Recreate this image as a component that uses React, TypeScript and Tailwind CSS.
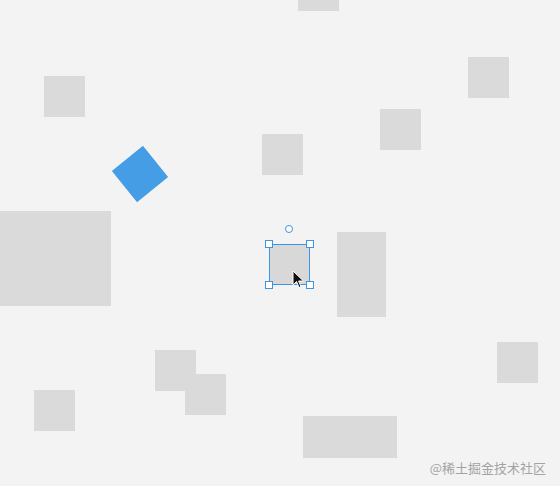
const shapes = [
  { x: 298, y: -30, w: 41, h: 41 },
  { x: 44, y: 76, w: 41, h: 41 },
  { x: 468, y: 57, w: 41, h: 41 },
  { x: 380, y: 109, w: 41, h: 41 },
  { x: 262, y: 134, w: 41, h: 41 },
  { x: 0, y: 211, w: 111, h: 95 },
  { x: 337, y: 232, w: 49, h: 85 },
  { x: 497, y: 342, w: 41, h: 41 },
  { x: 155, y: 350, w: 41, h: 41 },
  { x: 185, y: 374, w: 41, h: 41 },
  { x: 34, y: 390, w: 41, h: 41 },
  { x: 303, y: 416, w: 94, h: 42 },
];

function Handle({ className }: { className: string }) {
  return <div className={`absolute w-[8px] h-[8px] bg-white border border-[#3d94e0] ${className}`} />;
}

export default function App() {
  return (
    <div className="relative w-[560px] h-[486px] overflow-hidden bg-[#f3f3f3]">
      {shapes.map((s, i) => (
        <div
          key={i}
          className="absolute bg-[#dadada]"
          style={{ left: s.x, top: s.y, width: s.w, height: s.h }}
        />
      ))}

      {/* dragged piece */}
      <div className="absolute left-[120px] top-[154px] w-[40px] h-[40px] bg-[#459ee5] rotate-[51deg]" />

      {/* selected piece */}
      <div className="absolute left-[269px] top-[244px] w-[41px] h-[41px] bg-[#d8d8d8] border border-[#3d94e0]">
        <Handle className="-left-[5px] -top-[5px]" />
        <Handle className="-right-[5px] -top-[5px]" />
        <Handle className="-left-[5px] -bottom-[5px]" />
        <Handle className="-right-[5px] -bottom-[5px]" />
        <div className="absolute left-[15px] -top-[20px] w-[8px] h-[8px] rounded-full border border-[#3d94e0] bg-white" />
      </div>

      {/* cursor */}
      <svg className="absolute left-[292px] top-[270px]" width="13" height="19" viewBox="0 0 13 19">
        <path d="M1 1 L1 15 L4.5 11.5 L7 17.5 L9 16.6 L6.6 11 L11.5 11 Z" fill="#111" stroke="#fff" strokeWidth="1" strokeLinejoin="round" />
      </svg>

      <div className="absolute right-[14px] bottom-[12px] text-[13px] text-[#a3a3a3] font-['Noto_Sans_CJK_SC',sans-serif] leading-none">
        @稀土掘金技术社区
      </div>
    </div>
  );
}
